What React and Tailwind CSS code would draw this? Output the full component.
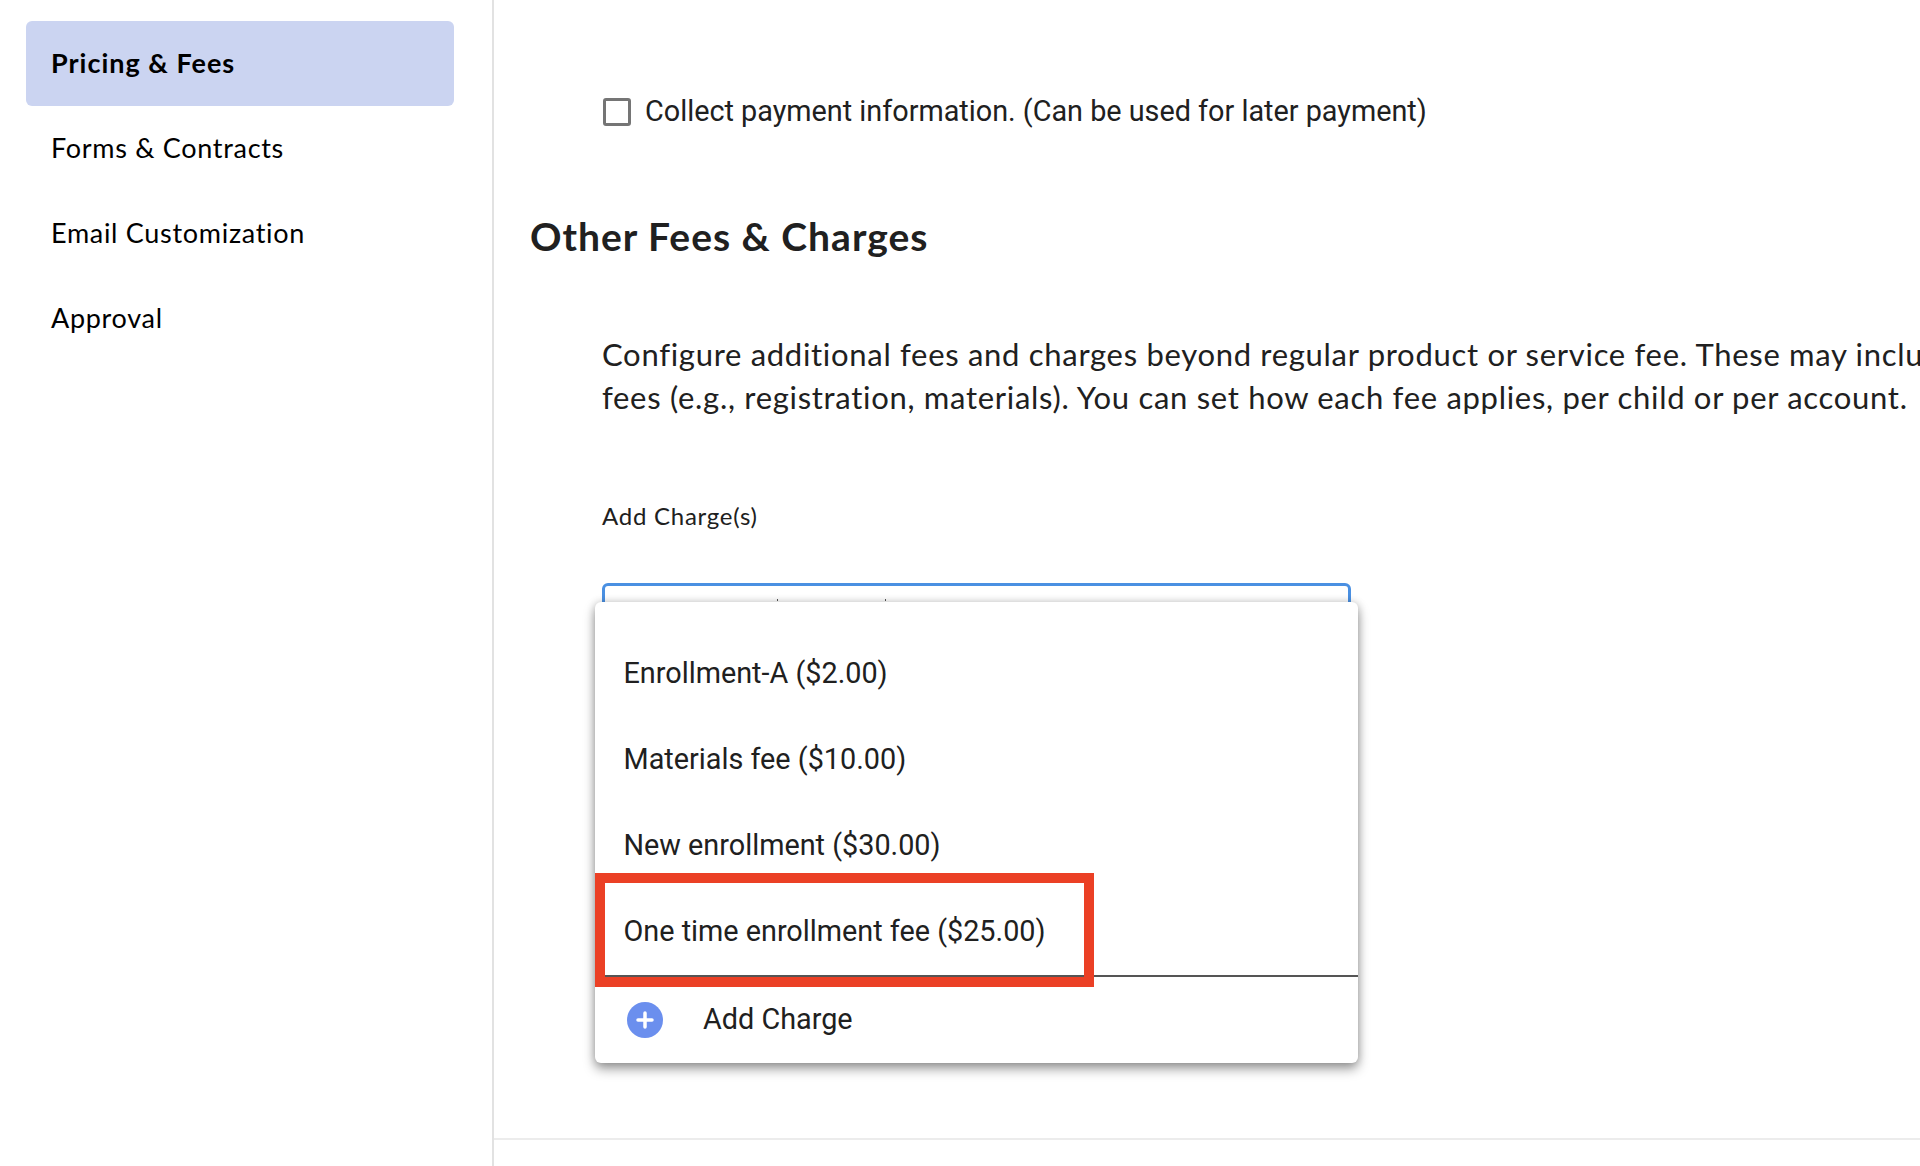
import { Plus } from 'lucide-react';

const navItems = ['Pricing & Fees', 'Forms & Contracts', 'Email Customization', 'Approval'];
const charges = ['Enrollment-A ($2.00)', 'Materials fee ($10.00)', 'New enrollment ($30.00)', 'One time enrollment fee ($25.00)'];

const App = () => {
  return (
    <div className="flex h-[1166px] w-[1920px] overflow-hidden bg-white font-['Lato',sans-serif] text-[#202020]">
      <aside className="w-[494px] shrink-0 border-r-2 border-[#e2e2e2] pt-[21px] pl-[26px]">
        {navItems.map((item, i) => (
          <div
            key={item}
            className={`flex h-[85px] w-[428px] items-center rounded-[6px] pl-[25px] text-[27px] text-black ${
              i === 0 ? 'bg-[#cbd4f1] font-bold tracking-[1px]' : 'tracking-[0.7px]'
            }`}
          >
            {item}
          </div>
        ))}
      </aside>

      <main className="flex min-w-0 flex-1 flex-col">
        <div className="relative h-[1138px] shrink-0 overflow-hidden pl-[36px]">
          <label className="mt-[97px] ml-[73px] flex h-[30px] items-center gap-[14px] font-['Roboto',sans-serif] text-[28.8px] whitespace-nowrap">
            <span className="h-[28px] w-[28px] shrink-0 rounded-[3px] border-[3px] border-[#757575]" />
            Collect payment information. (Can be used for later payment)
          </label>

          <h2 className="mt-[85px] text-[39px] leading-[48px] font-bold tracking-[1px] whitespace-nowrap">
            Other Fees &amp; Charges
          </h2>

          <p className="mt-[73px] ml-[72px] text-[31px] leading-[43px] tracking-[0.7px] whitespace-nowrap">
            Configure additional fees and charges beyond regular product or service fee. These may include one-time
            <br />
            fees (e.g., registration, materials). You can set how each fee applies, per child or per account.
          </p>

          <div className="mt-[82px] ml-[72px] text-[24px] leading-[30px] tracking-[0.75px]">Add Charge(s)</div>

          <div className="relative mt-[52px] ml-[72px] h-[64px] w-[749px] rounded-[6px] border-[3px] border-[#4a90e2]">
            <span className="absolute top-[13px] left-[172px] h-[2px] w-[1px] bg-[#555]" />
            <span className="absolute top-[13px] left-[280px] h-[2px] w-[1px] bg-[#555]" />
          </div>

          <div className="absolute top-[602px] left-[101px] flex h-[461px] w-[763px] flex-col rounded-[6px] bg-white font-['Roboto',sans-serif] text-[28.8px] shadow-[0_6px_12px_rgba(0,0,0,0.38),0_0_8px_rgba(0,0,0,0.18)]">
            <ul className="flex h-[375px] flex-col justify-end border-b-2 border-[#555]">
              {charges.map((charge) => (
                <li key={charge} className="flex h-[86px] shrink-0 items-center pl-[28.5px] whitespace-nowrap">
                  {charge}
                </li>
              ))}
            </ul>
            <div className="flex flex-1 items-center pl-[32px]">
              <span className="flex h-[36px] w-[36px] items-center justify-center rounded-full bg-[#6b8fee]">
                <Plus size={24} strokeWidth={3.5} color="#fff" />
              </span>
              <span className="ml-[40px]">Add Charge</span>
            </div>
          </div>

          <div className="absolute top-[873px] left-[101px] h-[114px] w-[499px] border-[10px] border-[#eb4025]" />
        </div>
        <div className="h-[2px] shrink-0 bg-[#ececec]" />
      </main>
    </div>
  );
};

export default App;
